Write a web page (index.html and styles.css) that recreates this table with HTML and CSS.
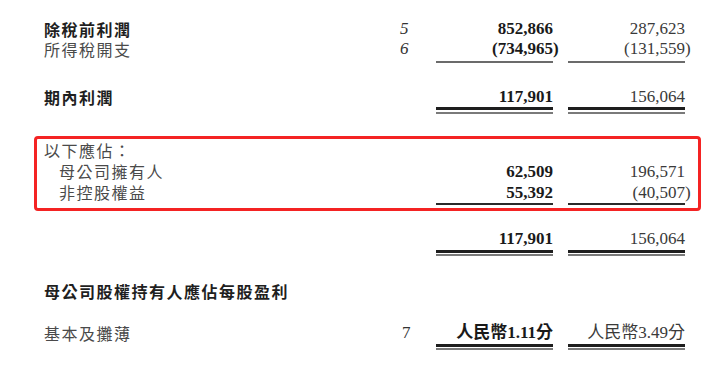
FILE: index.html
```html
<!DOCTYPE html>
<html lang="zh-Hant">
<head>
<meta charset="utf-8">
<link rel="stylesheet" href="styles.css">
</head>
<body>
<div class="sheet">
  <div class="row r1">
    <span class="label bold">除稅前利潤</span>
    <span class="note it">5</span>
    <span class="amt c1 bold">852,866</span>
    <span class="amt c2">287,623</span>
  </div>
  <div class="row">
    <span class="label">所得稅開支</span>
    <span class="note it">6</span>
    <span class="amt c1 bold">(734,965<span class="hang">)</span></span>
    <span class="amt c2">(131,559<span class="hang">)</span></span>
  </div>
  <div class="rule single-gray">
    <span class="line c1"></span><span class="line c2"></span>
  </div>

  <div class="row r3">
    <span class="label bold">期內利潤</span>
    <span class="amt c1 bold">117,901</span>
    <span class="amt c2">156,064</span>
  </div>
  <div class="rule double">
    <span class="line c1"></span><span class="line c2"></span>
  </div>

  <div class="box">
    <div class="row tall">
      <span class="label">以下應佔：</span>
    </div>
    <div class="row tall">
      <span class="label sub">母公司擁有人</span>
      <span class="amt c1 bold">62,509</span>
      <span class="amt c2">196,571</span>
    </div>
    <div class="row tall">
      <span class="label sub">非控股權益</span>
      <span class="amt c1 bold">55,392</span>
      <span class="amt c2">(40,507<span class="hang">)</span></span>
    </div>
    <div class="rule single-dark">
      <span class="line c1"></span><span class="line c2"></span>
    </div>
  </div>

  <div class="row r-total">
    <span class="amt c1 bold">117,901</span>
    <span class="amt c2">156,064</span>
  </div>
  <div class="rule double d2">
    <span class="line c1"></span><span class="line c2"></span>
  </div>

  <div class="row r-eps-head">
    <span class="label bold wide">母公司股權持有人應佔每股盈利</span>
  </div>
  <div class="row r-eps">
    <span class="label">基本及攤薄</span>
    <span class="note">7</span>
    <span class="amt c1 bold">人民幣1.11分</span>
    <span class="amt c2">人民幣3.49分</span>
  </div>
  <div class="rule double d3">
    <span class="line c1"></span><span class="line c2"></span>
  </div>
</div>
</body>
</html>
```

FILE: styles.css
```css
html, body {
  margin: 0;
  padding: 0;
  background: #ffffff;
}

.sheet {
  padding: 19px 0 0 44px;
  width: 641px;
}

.row,
.rule {
  display: grid;
  grid-template-columns: 356px 36px 117px 15px 117px;
  align-items: center;
}

.row {
  height: 20px;
  line-height: 20px;
}

.row.tall {
  height: 21px;
  line-height: 21px;
}

.label {
  grid-column: 1;
  font-family: "Noto Sans CJK TC", "Noto Sans CJK SC", sans-serif;
  font-size: 16px;
  letter-spacing: 1.5px;
  color: #4a4a4a;
  white-space: nowrap;
}

.label.bold {
  font-weight: 700;
  color: #1f1f1f;
}

.label.sub {
  padding-left: 15px;
}

.note {
  grid-column: 2;
  font-family: "Liberation Serif", "Times New Roman", serif;
  font-size: 17px;
  color: #333;
  padding-left: 2px;
}

.note.it {
  font-style: italic;
  padding-left: 0;
}

.amt {
  font-family: "Liberation Serif", "Times New Roman", "Noto Sans CJK TC", serif;
  font-size: 17px;
  color: #3a3a3a;
  text-align: right;
  white-space: nowrap;
}

.amt.bold {
  font-weight: 700;
  color: #1a1a1a;
}

.c1 { grid-column: 3; }
.c2 { grid-column: 5; }

.hang {
  margin-right: -0.333em;
}

/* rules */
.rule .line {
  display: block;
}

.single-gray {
  margin-top: 2px;
}
.single-gray .line {
  height: 2px;
  background: #6b6b6b;
}

.single-dark .line {
  height: 2px;
  background: #2a2a2a;
}

.double .line {
  height: 2px;
  border-top: 3px solid #1e1e1e;
  border-bottom: 2px solid #7a7a7a;
}

.r3 { margin-top: 24px; }

.box {
  margin: 22px 0 0 -10px;
  width: 641px;
  padding: 1px 13px 3px 7px;
  border: 3px solid #f42323;
  border-radius: 4px;
}

.r-total { margin-top: 18px; }
.d2 { margin-top: 1px; }
.d2 .line { height: 1px; }

.r-eps-head { margin-top: 25px; }
.r-eps { margin-top: 22px; }
.d3 { margin-top: 1px; }
.d3 .line { height: 1px; }
```
